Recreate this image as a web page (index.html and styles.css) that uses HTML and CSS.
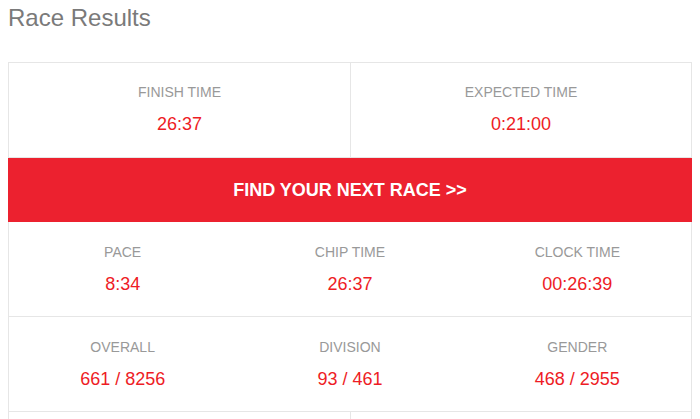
FILE: index.html
```html
<!DOCTYPE html>
<html>
<head>
    <meta charset="UTF-8">
    <title>Race Results</title>
    <link rel="stylesheet" href="styles.css">
</head>
<body>
<h1 class="page-title">Race Results</h1>
<div class="results">
    <div class="row two">
        <div class="cell">
            <div class="label">Finish Time</div>
            <div class="value">26:37</div>
        </div>
        <div class="cell">
            <div class="label">Expected Time</div>
            <div class="value">0:21:00</div>
        </div>
    </div>
    <a class="next-race" href="#">FIND YOUR NEXT RACE &gt;&gt;</a>
    <div class="row three">
        <div class="cell">
            <div class="label">Pace</div>
            <div class="value">8:34</div>
        </div>
        <div class="cell">
            <div class="label">Chip Time</div>
            <div class="value">26:37</div>
        </div>
        <div class="cell">
            <div class="label">Clock Time</div>
            <div class="value">00:26:39</div>
        </div>
    </div>
    <div class="row three">
        <div class="cell">
            <div class="label">Overall</div>
            <div class="value">661 / 8256</div>
        </div>
        <div class="cell">
            <div class="label">Division</div>
            <div class="value">93 / 461</div>
        </div>
        <div class="cell">
            <div class="label">Gender</div>
            <div class="value">468 / 2955</div>
        </div>
    </div>
    <div class="row two">
        <div class="cell"></div>
        <div class="cell"></div>
    </div>
</div>
</body>
</html>
```

FILE: styles.css
```css
*{
    box-sizing:border-box;
}

body{
    margin:0 8px;
    font-family:"Liberation Sans", Arial, sans-serif;
    background:#fff;
}

.page-title{
    margin:4px 0 30px;
    font-size:24px;
    line-height:28px;
    font-weight:normal;
    color:#7a7a7a;
}

.results{
    border:1px solid #e6e6e6;
    border-bottom:none;
}

.row{
    display:grid;
    border-bottom:1px solid #e6e6e6;
}

.row.two{
    grid-template-columns:1fr 1fr;
}

.row.two .cell + .cell{
    border-left:1px solid #e6e6e6;
}

.row.three{
    grid-template-columns:1fr 1fr 1fr;
}

.row.three .cell{
    padding-top:22px;
}

.cell{
    height:94px;
    padding-top:21px;
    text-align:center;
}

.label{
    font-size:14px;
    line-height:16px;
    color:#999;
    text-transform:uppercase;
}

.value{
    margin-top:13px;
    font-size:18px;
    line-height:22px;
    color:#ee1c25;
}

.next-race{
    display:block;
    height:65px;
    line-height:65px;
    background:#ec212f;
    color:#fff;
    text-align:center;
    text-decoration:none;
    font-size:18px;
    font-weight:bold;
    margin:-1px -1px 0;
    border-top:1px solid #e6e6e6;
}
```
